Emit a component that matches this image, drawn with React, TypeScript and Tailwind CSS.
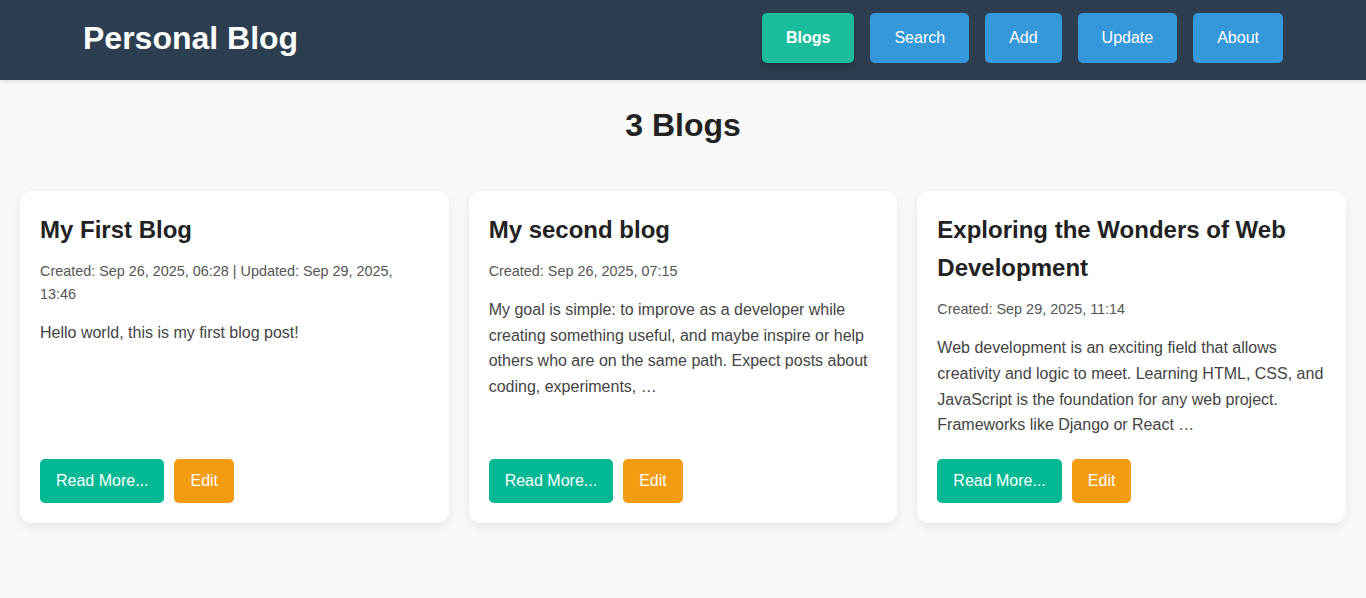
import React from 'react';

interface Blog {
  id: number;
  title: string;
  meta: string;
  excerpt: string;
}

const blogs: Blog[] = [
  {
    id: 1,
    title: 'My First Blog',
    meta: 'Created: Sep 26, 2025, 06:28 | Updated: Sep 29, 2025, 13:46',
    excerpt: 'Hello world, this is my first blog post!',
  },
  {
    id: 2,
    title: 'My second blog',
    meta: 'Created: Sep 26, 2025, 07:15',
    excerpt:
      'My goal is simple: to improve as a developer while creating something useful, and maybe inspire or help others who are on the same path. Expect posts about coding, experiments, …',
  },
  {
    id: 3,
    title: 'Exploring the Wonders of Web Development',
    meta: 'Created: Sep 29, 2025, 11:14',
    excerpt:
      'Web development is an exciting field that allows creativity and logic to meet. Learning HTML, CSS, and JavaScript is the foundation for any web project. Frameworks like Django or React …',
  },
];

const navItems = ['Blogs', 'Search', 'Add', 'Update', 'About'];

const App: React.FC = () => {
  return (
    <div className="min-h-screen bg-[#f9f9f9] font-['Liberation_Sans',Arial,sans-serif] leading-[1.6] text-[#333]">
      {/* Header */}
      <header className="h-20 pb-1 bg-[#2c3e50] shadow-[0_2px_4px_rgba(0,0,0,0.1)]">
        <div className="max-w-[1200px] mx-auto h-full flex items-center justify-between">
          <h1 className="text-[32px] font-bold text-white leading-[1.2]">Personal Blog</h1>
          <nav className="flex gap-4">
            {navItems.map((item) =>
              item === 'Blogs' ? (
                <a
                  key={item}
                  className="px-6 py-4 leading-[18px] text-base font-bold text-white bg-[#1abc9c] rounded-[5px] shadow-[0_4px_8px_rgba(0,0,0,0.2)]"
                >
                  {item}
                </a>
              ) : (
                <a
                  key={item}
                  className="px-6 py-4 leading-[18px] text-base text-white bg-[#3498db] rounded-[5px]"
                >
                  {item}
                </a>
              )
            )}
          </nav>
        </div>
      </header>

      {/* Main content */}
      <main>
        <h2 className="text-[32px] font-bold text-[#222] text-center leading-[37px] mt-[26.5px]">
          {blogs.length} Blogs
        </h2>
        <div className="grid grid-cols-3 gap-5 p-5 mt-[27px]">
          {blogs.map((blog) => (
            <div
              key={blog.id}
              className="bg-white rounded-xl p-5 flex flex-col shadow-[0_4px_12px_rgba(0,0,0,0.08)]"
            >
              <h3 className="text-2xl font-bold text-[#222] leading-[1.6]">{blog.title}</h3>
              <p className="mt-[11px] text-[14.4px] text-[#555] leading-[1.6]">{blog.meta}</p>
              <p className="mt-[14px] text-base text-[#444] leading-[1.6]">{blog.excerpt}</p>
              <div className="mt-auto pt-[21px] flex gap-[10px]">
                <a className="h-11 px-4 flex items-center text-base text-white bg-[#00b894] rounded-[5px]">
                  Read More...
                </a>
                <a className="h-11 px-4 flex items-center text-base text-white bg-[#f39c12] rounded-[5px]">
                  Edit
                </a>
              </div>
            </div>
          ))}
        </div>
      </main>
    </div>
  );
};

export default App;
